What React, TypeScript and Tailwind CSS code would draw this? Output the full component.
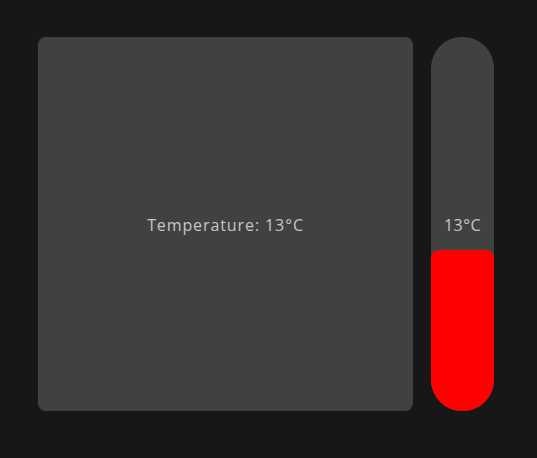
export default function App() {
  const pct = 43;
  return (
    <div
      className="h-[458px] w-[537px] bg-[#171717] pl-[38px] pt-[37px] flex gap-[18px]"
      style={{ fontFamily: '"Open Sans", "Noto Sans", sans-serif' }}
    >
      {/* Main card */}
      <div className="w-[375px] h-[374px] rounded-lg bg-[#414141] flex items-center justify-center">
        <span className="text-[16px] text-[#c6c6c6] tracking-[0.9px] translate-y-[1px]">Temperature: 13°C</span>
      </div>

      {/* Thermometer */}
      <div className="relative w-[63px] h-[374px] rounded-[31px] overflow-hidden bg-[#414141] flex flex-col justify-end">
        <div className="absolute inset-x-0 top-[176px] text-center text-[16px] tracking-[0.5px] text-[#c6c6c6]">13°C</div>
        <div className="w-full rounded-t-lg bg-[#ff0000]" style={{ height: `${pct}%` }} />
      </div>
    </div>
  );
}
